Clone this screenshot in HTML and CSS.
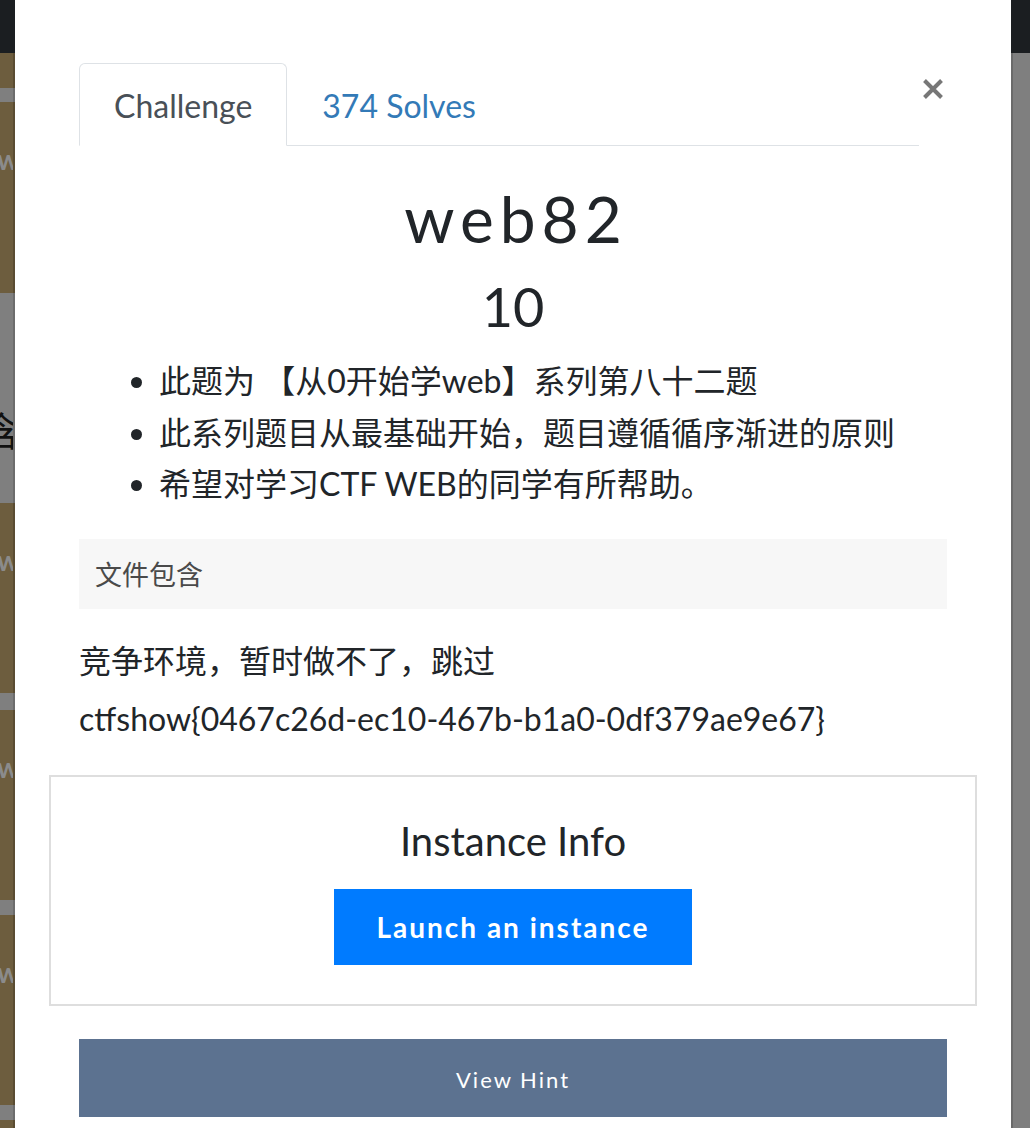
FILE: index.html
```html
<!DOCTYPE html>
<html lang="zh">
<head>
<meta charset="utf-8">
<title>web82</title>
<link rel="stylesheet" href="styles.css">
</head>
<body>
<div class="screen">
  <div class="side side-left">
    <div class="bg-nav"></div>
    <div class="bg-card h36"></div>
    <div class="bg-gap h14"></div>
    <div class="bg-card h191"><span class="card-title">web</span></div>
    <div class="bg-gap bg-blank h210"><span class="blank-text">文件包含</span></div>
    <div class="bg-card h190"><span class="card-title">web</span></div>
    <div class="bg-gap h17"></div>
    <div class="bg-card h190"><span class="card-title">web</span></div>
    <div class="bg-gap h15"></div>
    <div class="bg-card h190"><span class="card-title">web</span></div>
    <div class="bg-gap h15"></div>
    <div class="bg-card fill"></div>
  </div>

  <div class="modal">
    <div class="tabs-row">
      <ul class="nav-tabs">
        <li class="tab active">Challenge</li>
        <li class="tab link">374 Solves</li>
      </ul>
      <div class="close" aria-label="Close">
        <svg width="22" height="22" viewBox="0 0 22 22"><path d="M2.5 2.5 L19.5 19.5 M19.5 2.5 L2.5 19.5" stroke="#777" stroke-width="4" stroke-linecap="butt"/></svg>
      </div>
    </div>

    <h2 class="title">web82</h2>
    <h3 class="value">10</h3>

    <ul class="desc">
      <li>此题为 【从0开始学web】系列第八十二题</li>
      <li>此系列题目从最基础开始，题目遵循循序渐进的原则</li>
      <li>希望对学习CTF WEB的同学有所帮助。</li>
    </ul>

    <pre class="tag">文件包含</pre>

    <div class="answer">
      <p>竞争环境，暂时做不了，跳过</p>
      <p>ctfshow{0467c26d-ec10-467b-b1a0-0df379ae9e67}</p>
    </div>

    <div class="instance">
      <h4 class="instance-title">Instance Info</h4>
      <button class="btn-launch">Launch an instance</button>
    </div>

    <button class="btn-hint">View Hint</button>
  </div>

  <div class="side side-right">
    <div class="bg-nav"></div>
    <div class="bg-gap fill edge-left"></div>
  </div>
</div>
</body>
</html>
```

FILE: styles.css
```css
html, body {
  margin: 0;
  padding: 0;
  height: 100%;
  overflow: hidden;
  background: #7f7f7f;
}

.screen {
  display: flex;
  height: 1128px;
  font-family: Lato, "Noto Sans CJK SC", sans-serif;
  color: #212529;
}

/* ---------- dimmed page behind the modal ---------- */
.side {
  display: flex;
  flex-direction: column;
  overflow: hidden;
}
.side-left { width: 15px; flex: none; }
.side-right { width: 19px; flex: none; }

.bg-nav {
  height: 53px;
  flex: none;
  background: #1b1e21;
}
.bg-card {
  flex: none;
  background: #6d5d3e;
  border-right: 2px solid #5a4c32;
  box-sizing: border-box;
  overflow: hidden;
}
.bg-gap {
  flex: none;
  background: #7f7f7f;
  border-right: 2px solid #6c6c6c;
  box-sizing: border-box;
}
.side-right .bg-gap { border-right: none; }
.edge-left { border-left: 2px solid #6a6a6a; }
.fill { flex: 1; }

.h14 { height: 14px; }
.h15 { height: 15px; }
.h17 { height: 17px; }
.h36 { height: 35px; }
.h190 { height: 190px; }
.h191 { height: 191px; }
.h210 { height: 210px; }

.card-title {
  display: block;
  margin: 40px 0 0 -3px;
  font: 700 28px/34px Lato, sans-serif;
  color: #8b8b8b;
  white-space: nowrap;
}

.bg-blank {
  display: flex;
  justify-content: flex-end;
  overflow: hidden;
  padding-top: 112px;
}
.blank-text {
  flex: none;
  font: 400 40px/48px "Noto Sans CJK SC", sans-serif;
  color: #111;
  white-space: nowrap;
  margin-right: -8px;
}

/* ---------- modal ---------- */
.modal {
  width: 996px;
  flex: none;
  background: #fff;
  box-sizing: border-box;
  padding: 63px 64px 0;
  overflow: hidden;
}

.tabs-row {
  display: flex;
  align-items: flex-start;
}
.nav-tabs {
  flex: 1;
  display: flex;
  list-style: none;
  margin: 0;
  padding: 0;
  border-bottom: 1px solid #dee2e6;
  height: 82px;
}
.tab {
  font-size: 32px;
  line-height: 40px;
  padding: 22px 34px 18px;
  border: 1px solid transparent;
  border-radius: 6px 6px 0 0;
  margin-bottom: -1px;
}
.tab.active {
  color: #495057;
  background: #fff;
  border-color: #dee2e6 #dee2e6 #fff;
}
.tab.link {
  color: #337ab7;
}
.close {
  width: 28px;
  flex: none;
  display: flex;
  justify-content: center;
  margin-top: 15px;
}
.close svg { display: block; }

.title {
  margin: 34px 0 17px;
  padding-left: 6px;
  text-align: center;
  font-size: 64px;
  line-height: 77px;
  font-weight: 400;
  letter-spacing: 6px;
  color: #212529;
}
.value {
  margin: 0;
  text-align: center;
  font-size: 54px;
  line-height: 65px;
  font-weight: 400;
  color: #212529;
}

.desc {
  margin: 16px 0 29px;
  padding-left: 80px;
  font-size: 32px;
  line-height: 51.5px;
}

.tag {
  margin: 0 0 28px;
  padding: 16px;
  background: #f7f7f7;
  font: 400 27px/38px "Noto Sans CJK SC", sans-serif;
  color: #4a4a4a;
}

.answer p {
  margin: 0;
  font-size: 32px;
  line-height: 48px;
}
.answer p + p { margin-top: 10px; }

.instance {
  margin: 32px -30px 0;
  border: 2px solid #dedede;
  padding: 40px 0 39px;
  text-align: center;
}
.instance-title {
  margin: 0 0 24px;
  font-size: 40px;
  line-height: 48px;
  font-weight: 400;
  color: #212529;
}
.btn-launch {
  width: 358px;
  height: 76px;
  border: none;
  background: #007bff;
  color: #fff;
  font: 700 28px/34px Lato, sans-serif;
  letter-spacing: 2px;
  cursor: pointer;
}

.btn-hint {
  display: block;
  width: 100%;
  height: 78px;
  margin-top: 33px;
  padding: 4px 0 0;
  border: none;
  background: #5c7290;
  color: #fff;
  font: 400 22px/30px Lato, sans-serif;
  letter-spacing: 2px;
}
```
